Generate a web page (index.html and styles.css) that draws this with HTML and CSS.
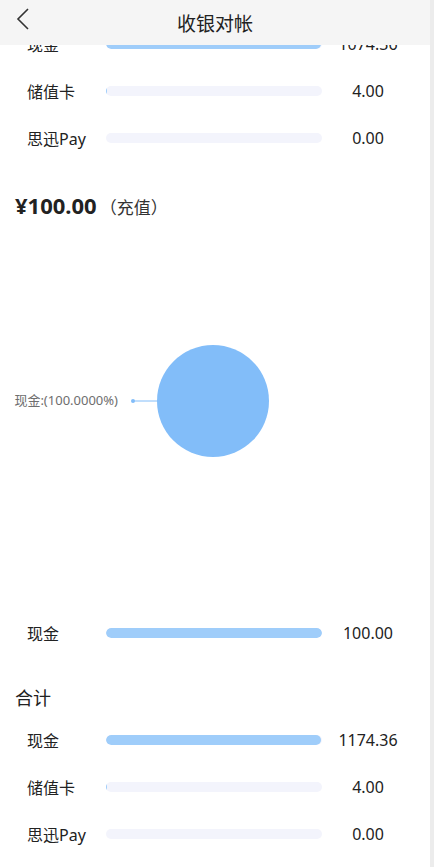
FILE: index.html
```html
<!DOCTYPE html>
<html lang="zh-CN">
<head>
    <meta charset="UTF-8">
    <meta name="viewport" content="width=device-width, initial-scale=1.0">
    <title>收银对帐</title>
    <link rel="stylesheet" href="styles.css">
</head>
<body>
    <header class="topbar">
        <a class="back" href="#">
            <svg width="14" height="22" viewBox="0 0 14 22"><polyline points="12,1 2,11 12,21" fill="none" stroke="#333" stroke-width="1.6"/></svg>
        </a>
        <h1>收银对帐</h1>
    </header>

    <div class="page">
        <div class="list">
            <div class="row">
                <span class="label">现金</span>
                <div class="track"><div class="fill" style="width: 99.63%"></div></div>
                <span class="value">1074.36</span>
            </div>
            <div class="row">
                <span class="label">储值卡</span>
                <div class="track"><div class="fill" style="width: 0.37%"></div></div>
                <span class="value">4.00</span>
            </div>
            <div class="row">
                <span class="label">思迅Pay</span>
                <div class="track"><div class="fill" style="width: 0%"></div></div>
                <span class="value">0.00</span>
            </div>
        </div>

        <h2 class="amount">¥100.00<small>（充值）</small></h2>

        <div class="chart">
            <svg width="430" height="386" viewBox="0 0 430 386">
                <circle cx="213" cy="178" r="56" fill="#82bdf9"/>
                <line x1="133" y1="178" x2="158" y2="178" stroke="#82bdf9" stroke-width="1"/>
                <circle cx="133" cy="178" r="2" fill="#82bdf9"/>
                <text x="118" y="182" text-anchor="end" class="pie-label">现金:(100.0000%)</text>
            </svg>
        </div>

        <div class="list">
            <div class="row">
                <span class="label">现金</span>
                <div class="track"><div class="fill" style="width: 100%"></div></div>
                <span class="value">100.00</span>
            </div>
        </div>

        <h3 class="section">合计</h3>
        <div class="list">
            <div class="row">
                <span class="label">现金</span>
                <div class="track"><div class="fill" style="width: 99.66%"></div></div>
                <span class="value">1174.36</span>
            </div>
            <div class="row">
                <span class="label">储值卡</span>
                <div class="track"><div class="fill" style="width: 0.34%"></div></div>
                <span class="value">4.00</span>
            </div>
            <div class="row">
                <span class="label">思迅Pay</span>
                <div class="track"><div class="fill" style="width: 0%"></div></div>
                <span class="value">0.00</span>
            </div>
        </div>
    </div>
</body>
</html>
```

FILE: styles.css
```css
body {
    font-family: "Noto Sans", "Noto Sans CJK SC", sans-serif;
    margin: 0;
    padding: 0;
    background: #fff;
    color: #222;
    overflow: hidden;
}
.page {
    width: 430px;
    border-right: 4px solid #ececec;
    min-height: 867px;
    padding-top: 20px;
}
.topbar {
    position: fixed;
    top: 0;
    left: 0;
    width: 430px;
    height: 45px;
    background: #f5f5f5;
    display: flex;
    align-items: center;
    justify-content: center;
    z-index: 2;
}
.topbar h1 {
    margin: 0;
    font-size: 19px;
    font-weight: 400;
    color: #222;
}
.back {
    position: absolute;
    left: 16px;
    top: 8px;
    display: flex;
}
.row {
    display: flex;
    align-items: center;
    height: 47px;
    padding-left: 27px;
    padding-right: 16px;
}
.label {
    width: 79px;
    font-size: 16px;
    color: #222;
}
.track {
    width: 216px;
    height: 10px;
    border-radius: 5px;
    background: #f3f4fc;
    overflow: hidden;
}
.fill {
    height: 100%;
    background: #9fcdfa;
    border-radius: 5px;
}
.value {
    flex: 1;
    text-align: center;
    font-size: 16px;
    color: #222;
}
.amount {
    margin: 29px 0 0 15px;
    font-size: 22px;
    line-height: 30px;
    font-weight: 700;
    color: #222;
}
.amount small {
    font-size: 17px;
    font-weight: 400;
    margin-left: 3px;
    color: #333;
}
.chart {
    height: 386px;
}
.chart svg {
    display: block;
}
.pie-label {
    font-size: 13px;
    fill: #6e6e6e;
}
.section {
    margin: 30px 0 6px 15px;
    font-size: 18px;
    line-height: 24px;
    font-weight: 400;
    color: #222;
}
```
